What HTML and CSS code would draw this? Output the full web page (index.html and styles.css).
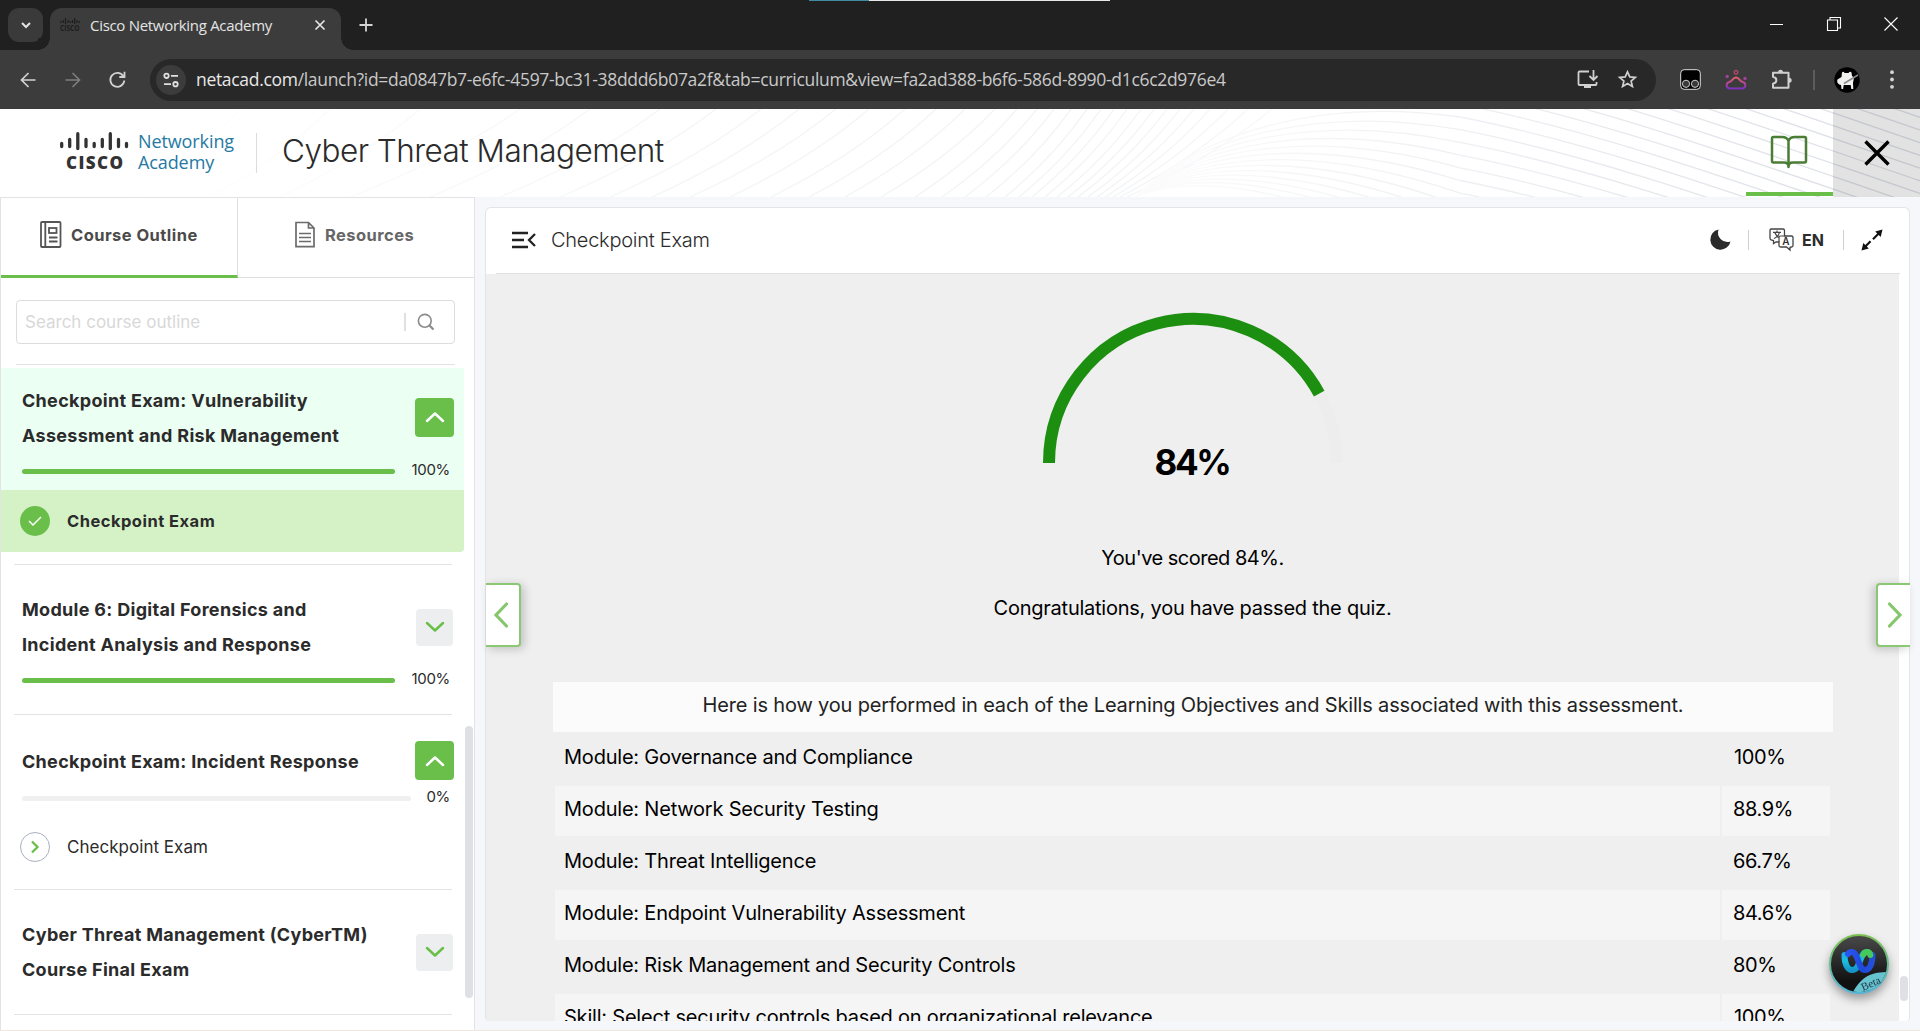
FILE: index.html
```html
<!DOCTYPE html>
<html lang="en">
<head>
<meta charset="utf-8">
<title>Cisco Networking Academy</title>
<link rel="stylesheet" href="styles.css">
</head>
<body>
<div class="window">
  <div class="tabstrip">
    <div class="loadline"></div>
    <button class="tab-search"><svg width="12" height="12" viewBox="0 0 12 12"><path d="M2 4l4 4 4-4" fill="none" stroke="#e3e3e3" stroke-width="2"/></svg></button>
    <div class="tab">
      <svg class="favicon" width="20" height="16" viewBox="0 0 20 16"><path d="M.8 4v2M3.200 3v3M5.500 1v6M8 3v3M10.200 4v2M12.500 3v3M14.700 1v6M17 3v3M19.300 4v2" stroke="#1d1d1d" stroke-width="1.200"/><text x="0" y="14" textLength="19.5" lengthAdjust="spacingAndGlyphs">CISCO</text></svg>
      <span class="tab-title">Cisco Networking Academy</span>
      <svg class="tab-x" width="12" height="12" viewBox="0 0 12 12"><path d="M1.500 1.500l9 9M10.500 1.500l-9 9" stroke="#e3e3e3" stroke-width="1.700"/></svg>
    </div>
    <svg class="tab-plus" width="14" height="14" viewBox="0 0 14 14"><path d="M7 .5v13M.5 7h13" stroke="#d5d5d5" stroke-width="1.800"/></svg>
    <div class="wincontrols">
      <svg width="14" height="14" viewBox="0 0 14 14"><path d="M0 7.500h13" stroke="#fff"/></svg>
      <svg width="14" height="14" viewBox="0 0 14 14"><path d="M.5 3h10v10.500h-10zM3 3V.5h10.500v10.500h-3" fill="none" stroke="#fff" stroke-width="1.100"/></svg>
      <svg width="14" height="14" viewBox="0 0 14 14"><path d="M.5.5l13 13M13.500.5l-13 13" stroke="#fff" stroke-width="1.100"/></svg>
    </div>
  </div>
  <div class="toolbar">
    <svg class="nav" width="16" height="16" viewBox="0 0 16 16"><path d="M15.500 8H2M8.500 1L1.500 8l7 7" fill="none" stroke="#d2d2d2" stroke-width="1.700"/></svg>
    <svg class="nav" width="16" height="16" viewBox="0 0 16 16"><path d="M.5 8H14M7.500 1l7 7-7 7" fill="none" stroke="#7d7d7d" stroke-width="1.700"/></svg>
    <svg class="nav" width="17" height="17" viewBox="0 0 17 17"><path d="M14.500 5.500A7 7 0 1 0 15.300 9.500M15.500.8V6h-5.200" fill="none" stroke="#d2d2d2" stroke-width="1.800"/></svg>
    <div class="omnibox">
      <span class="site"><svg width="18" height="16" viewBox="0 0 18 16"><g fill="none" stroke="#e0e0e0" stroke-width="1.800"><circle cx="4.500" cy="3.800" r="2.200"/><circle cx="13.500" cy="12.200" r="2.200"/><path d="M9 3.800h7M2 12.200h7"/></g></svg></span>
      <span class="url"><b>netacad.com</b>/launch?id=da0847b7-e6fc-4597-bc31-38ddd6b07a2f&amp;tab=curriculum&amp;view=fa2ad388-b6f6-586d-8990-d1c6c2d976e4</span>
      <svg width="21" height="19" viewBox="0 0 21 19"><path d="M12 1.500H2.500a1 1 0 0 0-1 1v11.500a1 1 0 0 0 1 1h16a1 1 0 0 0 1-1V12M16.500 0v9.500M12.500 6l4 4 4-4" fill="none" stroke="#d0d0d0" stroke-width="1.800"/><path d="M7 15h7v3H7z" fill="#d0d0d0"/></svg>
      <svg class="star" width="19" height="19" viewBox="0 0 19 19"><path d="M9.500 1.900l2.300 5 5.500.5-4.200 3.600 1.300 5.400-4.900-2.900-4.900 2.900 1.300-5.400L1.700 7.400l5.500-.5z" fill="none" stroke="#d0d0d0" stroke-width="1.700"/></svg>
    </div>
    <div class="exts">
      <svg width="21" height="21" viewBox="0 0 21 21"><rect x=".7" y=".7" width="19.600" height="19.600" rx="3.500" fill="#000" stroke="#ddd"/><g fill="#3a3a3a" stroke="#ccc"><circle cx="6" cy="14.800" r="3.600"/><circle cx="15" cy="14.800" r="3.600"/></g></svg>
      <svg width="22" height="20" viewBox="0 0 22 20"><defs><linearGradient id="cl" gradientUnits="userSpaceOnUse" x1="0" y1="6" x2="0" y2="19"><stop stop-color="#ee6560"/><stop offset="1" stop-color="#7a2fc4"/></linearGradient></defs><path d="M5 18.500a3.300 3.300 0 0 1-.8-6.500c1-.3 1.600-.6 2.300-1.300C8 9 9 7.500 11 7.500s3 1.500 4.500 3.200c.7.700 1.300 1 2.300 1.300a3.300 3.300 0 0 1-.8 6.500z" fill="none" stroke="url(#cl)" stroke-width="2"/><circle cx="11" cy="2.300" r="1.800" fill="none" stroke="#b0486c" stroke-width="1.400"/><circle cx="2.200" cy="6.500" r="1.700" fill="#a0449a"/><circle cx="20" cy="8.500" r="1.700" fill="#a0449a"/></svg>
      <svg width="21" height="21" viewBox="0 0 21 21"><path d="M2 3.700h15.500v15H2v-4c4.500-1 4.500-6 0-7z" fill="none" stroke="#cfcfcf" stroke-width="2" stroke-linejoin="round"/><path d="M7 3.500a2.400 2.700 0 0 1 5 0zM18 8.700a2.700 2.500 0 0 1 0 5z" fill="#cfcfcf"/></svg>
      <i class="vbar"></i>
      <svg class="avatar" width="26" height="26" viewBox="0 0 26 26"><circle cx="13" cy="13" r="12.700" fill="#000"/><path d="M8 5.500q1.500-1.500 2.500.5h4q1.500-2 3-.5l.5 3.500 2 1.500-1 5.500.3 6h-2l-.6-4h-7l-.6 4H7.500L7 18c-3-.5-4.500-3-3.500-5.500l4-2.500z" fill="#f1f1ee"/><path d="M10 16.500L24 8" stroke="#8a8a8a" stroke-width="1.500"/></svg>
      <svg width="4" height="19" viewBox="0 0 4 19"><g fill="#d5d5d5"><circle cx="2" cy="2.200" r="1.900"/><circle cx="2" cy="9.500" r="1.900"/><circle cx="2" cy="16.800" r="1.900"/></g></svg>
    </div>
  </div>

  <header class="header">
    <svg class="waves" width="1920" height="88" viewBox="0 0 1920 88"><defs><linearGradient id="wl" gradientUnits="userSpaceOnUse" x1="100" y1="0" x2="1250" y2="0"><stop stop-color="#fff"/><stop offset=".5" stop-color="#f4f5f7"/><stop offset=".85" stop-color="#f2f3f5"/><stop offset="1" stop-color="#f6f7f9"/></linearGradient><linearGradient id="wr" gradientUnits="userSpaceOnUse" x1="1135" y1="0" x2="1800" y2="0"><stop stop-color="#fcfcfd"/><stop offset=".3" stop-color="#f4f5f7"/><stop offset="1" stop-color="#dee1e8"/></linearGradient></defs><g id="waves" fill="none" stroke-width="1.300"></g></svg>
    <div class="brand">
      <svg class="cisco" width="70" height="38" viewBox="0 0 70 38"><path d="M1.700 11.500v3M9.700 7.500v7M17.800 1.700v14.800M26 7.500v7M34.200 11.500v3M42.300 7.500v7M50.300 1.700v14.800M58.500 7.500v7M66.500 11.500v3" stroke="#333" stroke-width="3.300" stroke-linecap="round"/><text x="6" y="37" textLength="57" lengthAdjust="spacing">CISCO</text></svg>
      <div class="academy"><span>Networking</span><span>Academy</span></div>
      <i class="hbar"></i>
      <h1>Cyber Threat Management</h1>
    </div>
    <div class="book"><svg width="38" height="36" viewBox="0 0 38 36"><path d="M18.500 6C17.500 3 15 2 12 2H3.500q-1.500 0-1.500 1.500V26q0 1.500 1.500 1.500H14c2.500 0 4.500 1 4.500 4.500 0-3.500 2-4.500 4.500-4.500h11.500q1.500 0 1.500-1.500V3.500Q36 2 34.500 2H25c-3 0-5.500 1-6.500 4zv25" fill="none" stroke="#4a7d35" stroke-width="2.500" stroke-linejoin="round"/></svg></div>
    <div class="close"><svg width="26" height="26" viewBox="0 0 26 26"><path d="M1.500 1.500l23 23M24.500 1.500l-23 23" stroke="#000" stroke-width="3.400"/></svg></div>
  </header>

  <main class="main">
    <aside class="side">
      <nav class="tabs">
        <div class="stab on"><svg width="22" height="27" viewBox="0 0 22 27"><g fill="none" stroke="#555" stroke-width="1.800"><rect x="1" y="1" width="19.500" height="25" rx="1"/><path d="M5.300 1v25M9 16.500h8.500M9 20.500h8.500"/><rect x="9" y="7" width="7.500" height="5"/></g></svg><span>Course Outline</span></div>
        <div class="stab"><svg width="20" height="27" viewBox="0 0 20 27"><g fill="none" stroke="#6b6b6b" stroke-width="1.700"><path d="M1 1.500h12.500L19 7v18.700H1zM13.500 1.500V7H19M4 12.500h12M4 16.500h12M4 20.500h12"/></g></svg><span>Resources</span></div>
      </nav>
      <div class="search"><span class="ph">Search course outline</span><i></i><svg width="18" height="18" viewBox="0 0 18 18"><g fill="none" stroke="#8b8b8b" stroke-width="1.600"><circle cx="7.800" cy="7.800" r="6.400"/><path d="M12 12l4.500 4.500" stroke-width="2.200"/></g></svg></div>
      <div class="rule first"></div>
      <div class="outline">
        <div class="thumb"></div>
        <section class="mod active">
          <div class="row"><h2>Checkpoint Exam: Vulnerability<br>Assessment and Risk Management</h2><button class="tog up"><svg width="20" height="12" viewBox="0 0 20 12"><path d="M2 10l8-7.500 8 7.500"/></svg></button></div>
          <div class="prog"><i class="full"></i><span class="pct">100%</span></div>
        </section>
        <div class="item sel"><span class="dot"><svg width="16" height="14" viewBox="0 0 16 14"><path d="M2 7l4 4 8-8" fill="none" stroke="#fff" stroke-width="1.500"/></svg></span><span>Checkpoint Exam</span></div>
        <div class="rule r1"></div>
        <section class="mod m6">
          <div class="row"><h2>Module 6: Digital Forensics and<br>Incident Analysis and Response</h2><button class="tog"><svg width="20" height="12" viewBox="0 0 20 12"><path d="M2 2l8 7.500L18 2"/></svg></button></div>
          <div class="prog"><i class="full"></i><span class="pct">100%</span></div>
        </section>
        <div class="rule"></div>
        <section class="mod ir">
          <div class="row"><h2>Checkpoint Exam: Incident Response</h2><button class="tog up"><svg width="20" height="12" viewBox="0 0 20 12"><path d="M2 10l8-7.500 8 7.500"/></svg></button></div>
          <div class="prog"><i></i><span class="pct">0%</span></div>
        </section>
        <div class="item"><span class="dot ring"><svg width="10" height="14" viewBox="0 0 10 14"><path d="M2 1.500L7.500 7 2 12.500" fill="none" stroke="#6abf4b" stroke-width="2.300"/></svg></span><span>Checkpoint Exam</span></div>
        <div class="rule r3"></div>
        <section class="mod cy">
          <div class="row"><h2>Cyber Threat Management (CyberTM)<br>Course Final Exam</h2><button class="tog"><svg width="20" height="12" viewBox="0 0 20 12"><path d="M2 2l8 7.500L18 2"/></svg></button></div>
        </section>
        <div class="rule"></div>
      </div>
    </aside>

    <article class="panel">
      <div class="phead">
        <svg class="menu" width="24" height="18" viewBox="0 0 24 18"><path d="M0 2h16M0 9h12M0 16h16" stroke="#222" stroke-width="2.300"/><path d="M23 3l-6 6 6 6" fill="none" stroke="#222" stroke-width="2.300"/></svg>
        <span class="ptitle">Checkpoint Exam</span>
        <svg class="moon" width="21" height="21" viewBox="0 0 21 21"><path d="M8.500.5A10.200 10.200 0 1 0 20.500 12.500 9.500 9.500 0 0 1 8.500.5z" fill="#2b2b2b"/></svg>
        <i></i>
        <svg class="lang" width="26" height="23" viewBox="0 0 26 23"><path d="M2 1h12q1.500 0 1.500 1.500V8h7q1.500 0 1.500 1.500v8q0 1.500-1.500 1.500l-1.500.3V22l-3.500-3h-6Q10 19 10 17.500V14H7l-2.500 1.500V12.500L2 12Q1 11.500 1 10V2.500Q1 1 2 1z" fill="#fff" stroke="#444" stroke-width="1.300"/><path d="M10 14V9.500Q10 8 11.500 8h4M4 4.300h8M8 2.500v2M10.300 4.500c-.5 3-3 5-5.300 6M5.800 4.500c.8 2.500 2.500 4 4.500 5.500" fill="none" stroke="#444" stroke-width="1.200"/><text x="17" y="17">A</text></svg>
        <b>EN</b>
        <i></i>
        <svg class="expand" width="22" height="22" viewBox="0 0 22 22"><path d="M21.500.5l-1.800 7.500-2-2-5 5-1.500-1.500 5-5-2-2zM.5 21.500L2.300 14l2 2 4.500-4.500 1.500 1.500-4.500 4.500 2 2z" fill="#111"/></svg>
      </div>
      <div class="pbody">
        <div class="scroll">
          <div class="gauge">
            <svg width="300" height="150" viewBox="0 0 300 150"><path d="M6 150A144 144 0 0 1 294 150" fill="none" stroke="#ededed" stroke-width="12"/><path d="M6 150A144 144 0 0 1 276.200 80.600" fill="none" stroke="#1c8f10" stroke-width="12"/></svg>
            <strong>84%</strong>
          </div>
          <p class="score">You've scored 84%.</p>
          <p class="congrats">Congratulations, you have passed the quiz.</p>
          <div class="results">
            <div class="cap">Here is how you performed in each of the Learning Objectives and Skills associated with this assessment.</div>
            <div class="res"><span>Module: Governance and Compliance</span><span class="in">100%</span></div>
            <div class="res alt"><span>Module: Network Security Testing</span><span>88.9%</span></div>
            <div class="res"><span>Module: Threat Intelligence</span><span>66.7%</span></div>
            <div class="res alt"><span>Module: Endpoint Vulnerability Assessment</span><span>84.6%</span></div>
            <div class="res"><span>Module: Risk Management and Security Controls</span><span>80%</span></div>
            <div class="res alt"><span>Skill: Select security controls based on organizational relevance</span><span class="in">100%</span></div>
          </div>
        </div>
        <div class="sbar"><i></i></div>
      </div>
      <button class="pg prev"><svg width="16" height="26" viewBox="0 0 16 26"><path d="M13.500 2L3 13l10.500 11"/></svg></button>
      <button class="pg next"><svg width="16" height="26" viewBox="0 0 16 26"><path d="M2.500 2L13 13 2.500 24"/></svg></button>
      <svg class="webex" width="60" height="60" viewBox="0 0 60 60"><defs><linearGradient id="wb" x2="0" y2="1"><stop stop-color="#4a4a4a"/><stop offset=".8" stop-color="#111"/></linearGradient><linearGradient id="rim" x2="0" y2="1"><stop stop-color="#7cc04e"/><stop offset="1" stop-color="#55b4d8"/></linearGradient><linearGradient id="la" x2="0" y2="1"><stop stop-color="#20a8e6"/><stop offset=".5" stop-color="#19c0e0"/><stop offset="1" stop-color="#1595c8"/></linearGradient><linearGradient id="lb" x2="1" y2="0"><stop stop-color="#2b55ef"/><stop offset=".6" stop-color="#1e49dc"/><stop offset="1" stop-color="#2450d8"/></linearGradient><clipPath id="ci"><circle cx="30" cy="30" r="28.200"/></clipPath></defs><circle cx="30" cy="30" r="29" fill="url(#wb)" stroke="url(#rim)" stroke-width="2"/><g fill="none" stroke-width="6" stroke-linecap="round"><path d="M15.500 21c0 9 3 15 7.500 15s6-4 8-9 3-9 7-9" stroke="url(#la)"/><path d="M43.500 21c0 9-3 15-7.500 15-7 0-6.500-18-13-18-1.500 0-3 .5-4 2" stroke="url(#lb)"/><path d="M34.500 20.500c1-2 2-2.500 3.500-2.500s3 1 3.300 3" stroke="#44c95a"/></g><path d="M22 62C32 40 45 38 62 38v24z" fill="#66c3cf" clip-path="url(#ci)"/><text x="34" y="57" transform="rotate(-24 34 57)">Beta</text></svg>
    </article>
  </main>
</div>
<script src="waves.js"></script>
</body>
</html>
```
FILE: waves.js
```js
// Draws the two families of thin wave lines behind the page header.
const group = document.getElementById('waves');

function line(d, stroke) {
  const p = document.createElementNS('http://www.w3.org/2000/svg', 'path');
  p.setAttribute('d', d);
  p.setAttribute('stroke', `url(#${stroke})`);
  group.appendChild(p);
}

// Left family: [x at the bottom edge, x at the top edge]
[[60, 150], [130, 240], [210, 330], [280, 420], [350, 520], [430, 590], [500, 660], [560, 716], [610, 761], [652, 799], [690, 836],
 [730, 869], [771, 905], [809, 936], [845, 965], [881, 995], [915, 1017], [942, 1037], [965, 1054], [986, 1071],
 [1005, 1087], [1019, 1101], [1032, 1114], [1045, 1127], [1057, 1141], [1068, 1154], [1078, 1167], [1088, 1180],
 [1097, 1194], [1105, 1210], [1113, 1228], [1120, 1248], [1127, 1272]].forEach(([b, t]) => {
  const w = t - b;
  line(`M${b} 88Q${b + w * 0.6} 48 ${t} 0`, 'wl');
});

// Right family: crests beyond the crossing point, then falls to the right
for (let j = -16; j <= 12; j++) {
  const y = 8 + 12.7 * j;
  const tail = `C1600 ${y + 27} 1750 ${y + 82} 1920 ${y + 140}`;
  line(j < 0 ? `M1460 ${y}${tail}` : `M1135 88C1200 ${24 + 3 * j} 1320 ${-12 + 8 * j} 1460 ${y}${tail}`, 'wr');
}
```
FILE: styles.css
```css
* { box-sizing: border-box; }
body { margin: 0; overflow: hidden; font-family: Inter, "Liberation Sans", sans-serif; color: #2b2b2b; }
button { padding: 0; border: 0; display: flex; align-items: center; justify-content: center; }
svg { display: block; flex: none; overflow: visible; }
h1, h2, p { margin: 0; }
.window { width: 1920px; height: 1031px; display: flex; flex-direction: column; background: #f5f7fa; border-bottom: 1px solid #eee6e0; }

.tabstrip { height: 50px; background: #202020; display: flex; padding-left: 8px; position: relative; }
.loadline { position: absolute; left: 809px; top: 0; width: 301px; height: 1px; background: linear-gradient(90deg, #3f8ca0 60px, #e8e8e8 60px); }
.tab-search { width: 35px; height: 34px; margin-top: 8px; border-radius: 11px; background: #3a3a3a; }
.tab { width: 291px; height: 42px; margin: 8px 0 0 7px; background: #3c3c3c; border-radius: 12px 12px 0 0; display: flex; align-items: center; padding: 0 15px 9px 10px; position: relative; }
.tab::before, .tab::after { content: ""; position: absolute; bottom: 0; width: 12px; height: 12px; }
.tab::before { left: -12px; background: radial-gradient(circle at 0 0, #202020 11.500px, #3c3c3c 12px); }
.tab::after { right: -12px; background: radial-gradient(circle at 100% 0, #202020 11.500px, #3c3c3c 12px); }
.favicon text { font: 700 8px "Open Sans", sans-serif; fill: #1d1d1d; }
.tab-title { font: 15px "Open Sans", sans-serif; letter-spacing: -.3px; color: #e4e4e4; margin-left: 10px; flex: 1; white-space: nowrap; }
.tab-plus { margin: 18px 0 0 18px; }
.wincontrols { margin-left: auto; display: flex; gap: 43px; padding: 17px 22px 0 0; }

.toolbar { height: 59px; background: #3c3c3c; display: flex; align-items: center; padding: 0 23px 0 20px; }
.nav { margin-right: 29px; }
.nav + .nav { margin-right: 28px; }
.nav + .nav + .nav { margin-right: 24px; }
.omnibox { width: 1506px; height: 42px; border-radius: 21px; background: #282828; display: flex; align-items: center; padding: 0 19px 0 6px; }
.site { width: 30px; height: 30px; border-radius: 50%; background: #3c3c3c; display: flex; align-items: center; justify-content: center; }
.url { font: 17.500px "Open Sans", sans-serif; letter-spacing: -.31px; color: #c9c9c9; margin-left: 10px; padding-bottom: 2px; flex: 1; white-space: nowrap; }
.url b { font-weight: 400; color: #e8e8e8; }
.star { margin-left: 20px; }
.exts { flex: 1; display: flex; align-items: center; padding-left: 24px; }
.exts svg:nth-of-type(2), .exts svg:nth-of-type(3) { margin-left: 24px; }
.vbar { width: 2px; height: 20px; background: #5d5d5d; margin-left: 21px; }
.avatar { margin: 0 30px 0 19px; }

.header { height: 88px; background: #fff; display: flex; position: relative; }
.waves { position: absolute; left: 0; top: 0; overflow: hidden; }
.brand { flex: 1; display: flex; padding-left: 60px; position: relative; }
.cisco { margin-top: 23px; }
.cisco text { font: 800 17px "Open Sans", sans-serif; fill: #333; }
.academy { margin: 22px 0 0 8px; width: 118px; display: flex; flex-direction: column; align-items: flex-start; font: 18px/21px "Open Sans", sans-serif; letter-spacing: -.1px; color: #2579a3; }
.hbar { width: 1px; height: 40px; background: #dcdcdc; margin-top: 24px; }
h1 { font-weight: 300; font-size: 31.500px; letter-spacing: -.53px; line-height: 83px; margin-left: 25px; color: #2b2b2b; white-space: nowrap; }
.book { width: 87px; border-bottom: 4px solid #6abf4b; padding: 26px 0 0 24px; position: relative; margin-bottom: 1px; }
.close { width: 87px; background: rgba(0,0,0,.115); display: flex; align-items: center; justify-content: center; position: relative; }

.main { flex: 1; min-height: 0; display: flex; }
.side { width: 475px; background: #fff; border: 1px solid #e3e3e6; border-bottom: 0; display: flex; flex-direction: column; }
.tabs { display: flex; height: 80px; font-weight: 700; font-size: 16.500px; letter-spacing: .45px; }
.stab { flex: 1; display: flex; align-items: center; padding: 0 0 6px 57px; gap: 10px; border-bottom: 1px solid #e0e0e0; color: #666; }
.stab.on { flex: none; width: 237px; padding: 0 0 4px 39px; gap: 9px; border-bottom: 3px solid #6abf4b; border-right: 1px solid #e0e0e0; color: #4a4a4a; }
.search { margin: 22px 19px 0 15px; height: 44px; border: 1px solid #dcdcdc; border-radius: 4px; display: flex; align-items: center; padding: 0 19px 0 8px; font-size: 17px; color: #d8d8d8; }
.search .ph { flex: 1; }
.search i { width: 2px; height: 18px; background: #e0e0e0; margin-right: 11px; }
.rule { height: 1px; flex: none; background: #e3e3e3; margin: 0 22px 0 13px; }
.rule.first { margin: 20px 19px 3px 15px; }
.outline { flex: 1; min-height: 0; overflow: hidden; position: relative; }
.thumb { position: absolute; right: 1px; top: 358px; width: 8px; height: 272px; border-radius: 4px; background: #dee0e6; }
.mod { padding: 0 20px 0 21px; }
.mod.active { background: #ebfff3; height: 122px; padding-top: 15px; margin-right: 10px; padding-right: 10px; }
.row { display: flex; align-items: center; }
h2 { flex: 1; font-size: 18px; letter-spacing: .3px; line-height: 35px; font-weight: 700; white-space: nowrap; color: #2b2b2b; }
.tog { width: 37px; height: 37px; border-radius: 4px; background: #edeef0; margin: 0 1px 0 0; }
.tog.up { width: 39px; height: 39px; background: #6abf4b; margin: 0; }
.active .tog.up { margin-bottom: 2px; }
.tog path { fill: none; stroke: #6abf4b; stroke-width: 2.500; stroke-linecap: round; stroke-linejoin: round; }
.tog.up path { stroke: #fff; }
.prog { display: flex; align-items: center; height: 20px; margin-top: 7px; padding-right: 4px; }
.prog i { flex: 1; height: 5px; border-radius: 3px; background: #f0f0f0; margin: 3px 15px 0 0; }
.prog i.full { background: #6abf4b; margin-right: 16px; }
.pct { font-size: 15px; font-weight: 400; letter-spacing: -.3px; padding-bottom: 2px; }
.item { height: 62px; display: flex; align-items: center; padding-left: 19px; font-size: 17px; letter-spacing: .03px; margin-right: 10px; }
.item.sel { background: #d5f2c7; font-weight: 700; font-size: 16.500px; letter-spacing: .48px; border-radius: 0 0 4px 0; }
.dot { width: 30px; height: 30px; border-radius: 50%; background: #6abf4b; display: flex; align-items: center; justify-content: center; margin-right: 17px; }
.dot.ring { background: #fff; border: 1px solid #a9b0bd; }
.rule.r1 { margin-top: 12px; }
.m6 { height: 149px; padding-top: 27px; }
.ir { height: 101px; padding-top: 26px; }
.ir h2 { padding-top: 2px; }
.rule.r3 { margin-top: 11px; }
.cy { height: 124px; padding-top: 27px; }

.panel { width: 1425px; height: 814px; margin: 10px 0 0 10px; border: 1px solid #e2e4e8; border-bottom: 0; border-radius: 6px 6px 4px 4px; background: #fff; position: relative; display: flex; flex-direction: column; }
.phead { height: 66px; flex: none; margin: 0 9px 0 10px; border-bottom: 1px solid #e0e0e0; display: flex; align-items: center; padding: 0 17px 2px 16px; }
.ptitle { flex: 1; margin-left: 15px; font-weight: 300; font-size: 20px; letter-spacing: -.25px; }
.phead i { width: 1px; height: 20px; background: #cfcfcf; }
.moon { margin-right: 17px; }
.lang { margin: 0 7px 0 20px; }
.lang text { font: 600 10px Inter, sans-serif; fill: #333; text-anchor: middle; }
.phead b { font-size: 16px; font-weight: 700; margin-right: 19px; }
.expand { margin-left: 17px; }
.pbody { flex: 1; min-height: 0; display: flex; }
.scroll { width: 1413px; background: #efefef; overflow: hidden; color: #000; }
.sbar { width: 10px; padding: 702px 0 0 1px; }
.sbar i { display: block; width: 8px; height: 25px; border-radius: 4px; background: #dee0e6; }
.gauge { width: 300px; margin: 39px 0 0 557px; text-align: center; }
.gauge strong { display: block; font-size: 35px; letter-spacing: -2.400px; line-height: 44px; margin: -23px 2px 0 0; font-weight: 700; }
.score, .congrats { text-align: center; font-size: 20px; line-height: 30px; }
.score { margin-top: 59px; letter-spacing: -.5px; }
.congrats { margin-top: 20px; letter-spacing: -.24px; }
.results { margin: 59px 66px 0 67px; font-size: 20px; letter-spacing: -.21px; }
.cap { height: 50px; line-height: 46px; background: #fbfbfb; text-align: center; color: #222; letter-spacing: -.17px; }
.res { height: 50px; margin: 0 3px 2px 2px; display: grid; grid-template-columns: 1fr 108px; gap: 2px; line-height: 46px; }
.cap + .res { margin-top: 2px; }
.res > span { padding-left: 9px; white-space: nowrap; }
.res > span + span { padding-left: 11px; letter-spacing: -.4px; }
.res > span.in { padding-left: 12px; }
.res.alt > span { background: #f5f5f5; }
.pg { position: absolute; top: 375px; height: 64px; background: #fff; border: 2px solid #8cc774; }
.pg path { fill: none; stroke: #86c66c; stroke-width: 3.200; stroke-linecap: round; }
.prev { left: 0; width: 35px; padding-right: 4px; border-left: 0; border-radius: 0 4px 4px 0; box-shadow: 3px 2px 10px rgba(0,0,0,.2); }
.next { right: -1px; width: 34px; padding-left: 2px; border-right: 0; border-radius: 4px 0 0 4px; box-shadow: -3px 2px 10px rgba(0,0,0,.2); }
.webex { position: absolute; left: 1343px; top: 726px; border-radius: 50%; filter: drop-shadow(0 5px 5px rgba(0,0,0,.35)); }
.webex text { font: 11px "Liberation Serif", serif; fill: #234; }
```
